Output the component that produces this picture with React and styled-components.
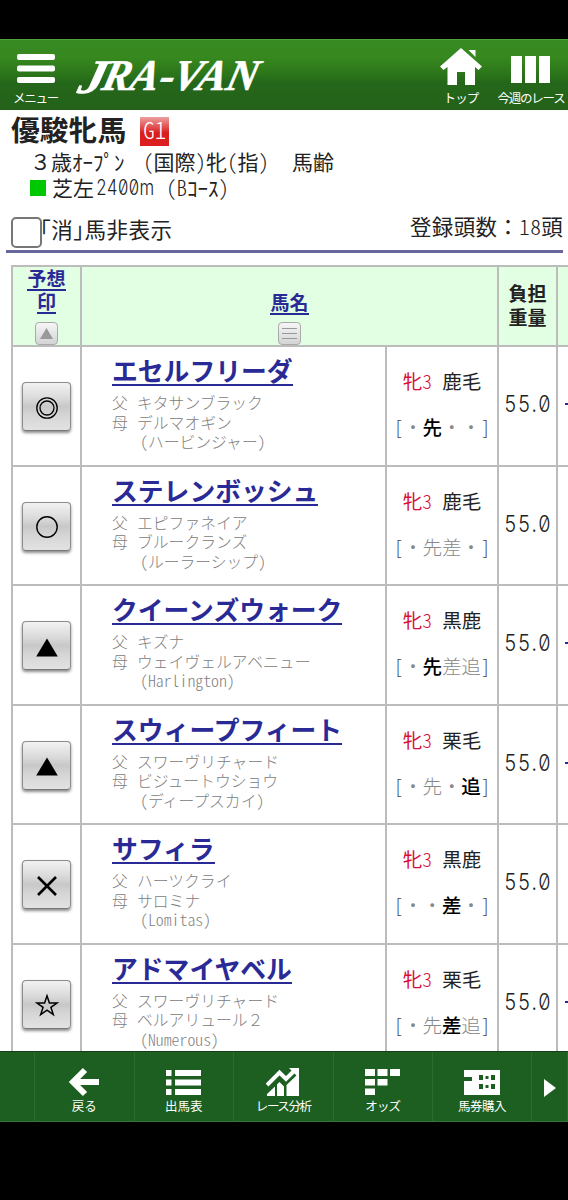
import React from 'react';
import styled, { createGlobalStyle, css } from 'styled-components';

const GlobalStyle = createGlobalStyle`
  * {
    box-sizing: border-box;
  }
  body {
    margin: 0;
    background: #000;
    font-family: 'Noto Sans CJK JP', sans-serif;
    color: #222;
  }
`;

const Screen = styled.div`
  width: 568px;
  height: 1200px;
  padding: 39px 0 78px;
  background: #000;
  display: flex;
  flex-direction: column;
  overflow: hidden;
`;

const Header = styled.header`
  height: 71px;
  flex: none;
  display: flex;
  align-items: stretch;
  border-top: 1px solid #52a03c;
  background: linear-gradient(#358a21 0%, #37881f 25%, #2a7219 52%, #24671a 60%, #24621a 100%);
  color: #fff;
`;

const HeaderButton = styled.div`
  width: ${(p) => p.$width}px;
  display: flex;
  flex-direction: column;
  align-items: center;
  justify-content: flex-end;
  padding-bottom: 5px;
  flex: none;
`;

const HeaderLabel = styled.span`
  font-size: 12.5px;
  line-height: 15px;
  letter-spacing: ${(p) => p.$spacing || 0}px;
  white-space: nowrap;
  margin-top: ${(p) => p.$gap || 3}px;
`;

const LogoArea = styled.div`
  flex: 1;
  display: flex;
  align-items: flex-start;
  padding: 14px 0 0 3px;

  svg {
    overflow: visible;
  }
`;

const Main = styled.main`
  flex: 1;
  min-height: 0;
  background: #fff;
  overflow: hidden;
`;

const RaceInfo = styled.section`
  margin: 0 5px 0 6px;
  height: 143px;
  border-bottom: 3px solid #67679b;
  padding-left: 5px;
`;

const TitleRow = styled.div`
  display: flex;
  align-items: center;
  gap: 14px;
  height: 38px;
`;

const RaceTitle = styled.h1`
  margin: 0;
  font-size: 28.8px;
  line-height: 38px;
  font-weight: 700;
`;

const GradeBadge = styled.span`
  width: 29px;
  height: 29px;
  margin-top: 5px;
  display: flex;
  align-items: center;
  justify-content: center;
  padding-bottom: 5px;
  background: linear-gradient(#eaa0a0 0%, #e04444 40%, #d91c1c 55%, #dc2020 100%);
  color: #fff;
  font-size: 23px;
  line-height: 24px;
  font-weight: 300;
  font-feature-settings: 'hwid';
`;

const InfoLine = styled.div`
  height: 26px;
  line-height: 24px;
  font-size: 21px;
  padding-left: 19px;
  display: flex;
  align-items: center;
  white-space: pre;
`;

const Turf = styled.i`
  width: 16px;
  height: 16px;
  margin: 1px 6px 0 0;
  background: #00c800;
`;

const Piece = styled.span`
  display: inline-block;
  width: ${(p) => p.$width}px;
  white-space: pre;
`;

// half-width latin letters, digits and brackets
const Half = styled.span`
  font-feature-settings: 'hwid';
  font-weight: 300;
`;

const Squeeze = styled.span`
  display: inline-block;
  font-family: Inter, 'Noto Sans CJK JP', sans-serif;
  font-feature-settings: 'zero', 'tnum';
  font-weight: 300;
  letter-spacing: ${(p) => p.$spacing || 0}px;
  transform: scaleX(${(p) => p.$ratio});
  transform-origin: ${(p) => p.$origin || 'left'} center;
`;

const FilterRow = styled.div`
  display: flex;
  align-items: center;
  height: 34px;
  margin-top: 13px;
  font-size: 21.5px;
  line-height: 26px;
`;

const Checkbox = styled.span`
  width: 31px;
  height: 31px;
  margin-top: 4px;
  border: 2px solid #777;
  border-radius: 5px;
  background: #fff;
  flex: none;
`;

const FilterLabel = styled.span`
  margin: 0 0 3px -2px;
  flex: 1;
  letter-spacing: 0.5px;
  font-feature-settings: 'halt';
`;

const Entries = styled.span`
  margin-bottom: 8px;
  letter-spacing: 0.3px;
`;

const columns = '69px 305px 112px 59px 60px';

const Table = styled.div`
  margin: 12px 0 0 11px;
  width: 607px;
  border-left: 2px solid #bcbcbc;
  border-top: 2px solid #bcbcbc;
`;

const cell = css`
  border-right: 2px solid #bcbcbc;
  border-bottom: 2px solid #bcbcbc;
`;

const HeadRow = styled.div`
  display: grid;
  grid-template-columns: 69px 417px 59px 60px;
  height: 80px;
  background: #e3ffe3;
`;

const HeadCell = styled.div`
  ${cell}
  display: flex;
  flex-direction: column;
  align-items: center;
  justify-content: ${(p) => (p.$middle ? 'center' : 'flex-end')};
  font-size: 19px;
  line-height: 23.5px;
  font-weight: 700;
  padding-bottom: ${(p) => (p.$middle ? 3 : 0)}px;
`;

const HeadLink = styled.a`
  color: #2a2a96;
  height: 23px;
  line-height: 20px;
  border-bottom: 2px solid #2a2a96;
  margin-bottom: ${(p) => p.$gap || 0}px;
`;

const SortButton = styled.span`
  width: 23px;
  height: 23px;
  border: 1px solid #aaa;
  border-radius: 4px;
  background: linear-gradient(#f6f6f6, #d4d4d4);
  display: flex;
  align-items: center;
  justify-content: center;
`;

const Row = styled.div`
  display: grid;
  grid-template-columns: ${columns};
  height: 119.5px;
`;

const Cell = styled.div`
  ${cell}
`;

const MarkCell = styled(Cell)`
  display: flex;
  align-items: center;
  justify-content: center;
  padding-top: 2px;
`;

const MarkButton = styled.span`
  width: 49px;
  height: 49px;
  padding-top: 2px;
  border: 1px solid #8c8c8c;
  border-bottom-color: #777;
  border-radius: 4px;
  background: linear-gradient(#f2f2f2 0%, #dcdcdc 30%, #c8c8c8 50%, #d6d6d6 70%, #e2e2e2 100%);
  box-shadow: 0 2px 3px rgba(0, 0, 0, 0.45);
  display: flex;
  align-items: center;
  justify-content: center;
`;

const HorseCell = styled(Cell)`
  padding: 8px 0 0 30px;
`;

const HorseName = styled.a`
  display: block;
  width: fit-content;
  height: 31px;
  font-size: 25.8px;
  line-height: 29px;
  font-weight: 700;
  color: #2a2a96;
  border-bottom: 2px solid #2a2a96;
  white-space: nowrap;
`;

const Pedigree = styled.div`
  margin-top: 7px;
  font-size: 15.8px;
  line-height: 19.5px;
  font-weight: 300;
  color: #808080;
`;

const Parent = styled.div`
  display: grid;
  grid-template-columns: 25px 1fr;
  height: 19.5px;
  white-space: nowrap;
`;

const Sire = styled.span`
  grid-column: 2;
  padding-left: ${(p) => (p.$grand ? 3 : 0)}px;
`;

const TypeCell = styled(Cell)`
  display: flex;
  flex-direction: column;
  align-items: center;
  padding-top: 19px;
  font-size: 19.5px;
  line-height: 29px;
`;

const Coat = styled.div`
  display: flex;
  gap: 10px;
`;

const Sex = styled.span`
  color: #d7103a;
`;

const Style = styled.div`
  margin-top: 17px;
  display: grid;
  grid-template-columns: 9.5px repeat(4, 19.4px) 9.5px;
  justify-items: center;
  color: #888;
`;

const Leg = styled.span`
  color: ${(p) => (p.$strong ? '#000' : '#888')};
  font-weight: ${(p) => (p.$strong ? 500 : 300)};
`;

const Bracket = styled.span`
  color: #444;
  font-weight: 300;
`;

const WeightCell = styled(Cell)`
  display: flex;
  align-items: center;
  justify-content: center;
  font-size: 23px;
  padding: 0 0 3px 1px;
`;

const JockeyCell = styled(Cell)`
  padding: 56px 0 0 7px;
`;

const JockeyLink = styled.a`
  display: block;
  height: 2px;
  background: #2a2a96;
`;

const Footer = styled.nav`
  height: 71px;
  flex: none;
  display: grid;
  grid-template-columns: 35px repeat(4, 99.5px) 99px 36px;
  background: #1d5f20;
  border-top: 1px solid #17401a;
  border-bottom: 1px solid #34733a;
  color: #fff;
`;

const Tab = styled.div`
  border-right: 1px solid #2a6d2d;
  display: flex;
  flex-direction: column;
  align-items: center;
  padding-top: 15px;
  font-size: 12.5px;
  line-height: 18px;
  white-space: nowrap;
`;

const TabLabel = styled.span`
  letter-spacing: ${(p) => p.$spacing || 0}px;
`;

const marks = {
  double: (
    <g fill="none" stroke="#000" strokeWidth="1.3">
      <circle cx="12" cy="12" r="10.2" />
      <circle cx="12" cy="12" r="7" />
    </g>
  ),
  circle: <circle cx="12" cy="12" r="10.2" fill="none" stroke="#000" strokeWidth="1.4" />,
  triangle: <path d="M12 3.5L22.8 21.5H1.2Z" />,
  cross: <path d="M3 3L21 21M21 3L3 21" stroke="#000" strokeWidth="2.6" />,
  star: (
    <path
      d="M12 2.8L14.4 10H22L15.9 14.3L18.3 21.6L12 17.1L5.7 21.6L8.1 14.3L2 10H9.6Z"
      fill="none"
      stroke="#000"
      strokeWidth="1.5"
    />
  ),
};

const horses = [
  { mark: 'double', name: 'エセルフリーダ', sire: 'キタサンブラック', dam: 'デルマオギン', grand: 'ハービンジャー', coat: '鹿毛', style: '・先・・', strong: '先', jockey: true },
  { mark: 'circle', name: 'ステレンボッシュ', sire: 'エピファネイア', dam: 'ブルークランズ', grand: 'ルーラーシップ', coat: '鹿毛', style: '・先差・', strong: '' },
  { mark: 'triangle', name: 'クイーンズウォーク', sire: 'キズナ', dam: 'ウェイヴェルアベニュー', grand: 'Harlington', latin: true, coat: '黒鹿', style: '・先差追', strong: '先', jockey: true },
  { mark: 'triangle', name: 'スウィープフィート', sire: 'スワーヴリチャード', dam: 'ビジュートウショウ', grand: 'ディープスカイ', coat: '栗毛', style: '・先・追', strong: '追', jockey: true },
  { mark: 'cross', name: 'サフィラ', sire: 'ハーツクライ', dam: 'サロミナ', grand: 'Lomitas', latin: true, coat: '黒鹿', style: '・・差・', strong: '差' },
  { mark: 'star', name: 'アドマイヤベル', sire: 'スワーヴリチャード', dam: 'ベルアリュール２', grand: 'Numerous', latin: true, coat: '栗毛', style: '・先差追', strong: '差', jockey: true },
];

const HorseRow = ({ horse }) => (
  <Row>
    <MarkCell>
      <MarkButton>
        <svg width="24" height="24" viewBox="0 0 24 24">{marks[horse.mark]}</svg>
      </MarkButton>
    </MarkCell>
    <HorseCell>
      <HorseName>{horse.name}</HorseName>
      <Pedigree>
        <Parent><span>父</span><Sire>{horse.sire}</Sire></Parent>
        <Parent><span>母</span><Sire>{horse.dam}</Sire></Parent>
        <Parent>
          <Sire $grand>
            {horse.latin
              ? <Half>({horse.grand})</Half>
              : <><Half>(</Half>{horse.grand}<Half>)</Half></>}
          </Sire>
        </Parent>
      </Pedigree>
    </HorseCell>
    <TypeCell>
      <Coat><Sex>牝<Half>3</Half></Sex><span>{horse.coat}</span></Coat>
      <Style>
        <Bracket>[</Bracket>
        {[...horse.style].map((c, i) => (
          <Leg key={i} $strong={c === horse.strong}>{c}</Leg>
        ))}
        <Bracket>]</Bracket>
      </Style>
    </TypeCell>
    <WeightCell><Squeeze $ratio={0.86} $spacing={1.2} $origin="center">55.0</Squeeze></WeightCell>
    <JockeyCell>{horse.jockey && <JockeyLink />}</JockeyCell>
  </Row>
);

const App = () => (
  <Screen>
    <GlobalStyle />
    <Header>
      <HeaderButton $width={71}>
        <svg width="38" height="29" viewBox="0 0 38 29" fill="#fff">
          <rect width="38" height="6" rx="2" />
          <rect y="11.5" width="38" height="6" rx="2" />
          <rect y="23" width="38" height="6" rx="2" />
        </svg>
        <HeaderLabel $spacing={-1.3} $gap={7}>メニュー</HeaderLabel>
      </HeaderButton>
      <LogoArea>
        <svg width="195" height="50" viewBox="0 0 195 50">
          <g
            transform="skewX(-14)"
            fill="#fff"
            stroke="#fff"
            strokeWidth="0.5"
            fontFamily="Liberation Serif, serif"
            fontWeight="700"
            fontStyle="italic"
          >
            <text x="12" y="39" fontSize="48" textLength="27" lengthAdjust="spacingAndGlyphs">J</text>
            <text x="35" y="35.500" fontSize="44" textLength="56" lengthAdjust="spacingAndGlyphs">RA</text>
            <text x="92" y="35.500" fontSize="43" textLength="15" lengthAdjust="spacingAndGlyphs">-</text>
            <text x="105" y="35.500" fontSize="44" textLength="85" lengthAdjust="spacingAndGlyphs">VAN</text>
          </g>
        </svg>
      </LogoArea>
      <HeaderButton $width={66}>
        <svg width="42" height="38" viewBox="0 0 42 38" fill="#fff">
          <path d="M21 0L42 18.5L38.5 22L35 19V37H25V24H17V37H7.500V19L3.500 22L0 18.500ZM28.500 2H35.500V9Z" />
        </svg>
        <HeaderLabel $spacing={-0.8} $gap={4}>トップ</HeaderLabel>
      </HeaderButton>
      <HeaderButton $width={74}>
        <svg width="40" height="34" viewBox="0 0 40 34" fill="#fff">
          <path d="M0 3H11V30H0ZM14 3H25V30H14ZM28 3H39V30H28Z" />
        </svg>
        <HeaderLabel $spacing={-1.2}>今週のレース</HeaderLabel>
      </HeaderButton>
    </Header>
    <Main>
      <RaceInfo>
        <TitleRow>
          <RaceTitle>優駿牝馬</RaceTitle>
          <GradeBadge>G1</GradeBadge>
        </TitleRow>
        <InfoLine>
          <Piece $width={113}>３歳ｵｰﾌﾟﾝ</Piece>
          <Piece $width={149}><Half>(</Half>国際<Half>)</Half>牝<Half>(</Half>指<Half>)</Half></Piece>
          <span>馬齢</span>
        </InfoLine>
        <InfoLine>
          <Turf />
          <Piece $width={44}>芝左</Piece>
          <Piece $width={70}><Squeeze $ratio={0.8}>2400m</Squeeze></Piece>
          <span><Half>(B</Half>ｺｰｽ<Half>)</Half></span>
        </InfoLine>
        <FilterRow>
          <Checkbox />
          <FilterLabel>「消」馬非表示</FilterLabel>
          <Entries>登録頭数：<Half>18</Half>頭</Entries>
        </FilterRow>
      </RaceInfo>
      <Table>
        <HeadRow>
          <HeadCell>
            <HeadLink>予想</HeadLink>
            <HeadLink $gap={8}>印</HeadLink>
            <SortButton>
              <svg width="13" height="11" viewBox="0 0 13 11"><path d="M6.500 0L13 11H0Z" fill="#999" /></svg>
            </SortButton>
          </HeadCell>
          <HeadCell>
            <HeadLink $gap={7}>馬名</HeadLink>
            <SortButton>
              <svg width="15" height="13" viewBox="0 0 15 13"><path d="M0 1.500H15M0 6.500H15M0 11.500H15" stroke="#999" /></svg>
            </SortButton>
          </HeadCell>
          <HeadCell $middle><span>負担</span><span>重量</span></HeadCell>
          <HeadCell />
        </HeadRow>
        {horses.map((horse) => <HorseRow key={horse.name} horse={horse} />)}
      </Table>
    </Main>
    <Footer>
      <Tab />
      <Tab>
        <svg width="30" height="30" viewBox="0 0 30 30" fill="none" stroke="#fff" strokeWidth="6">
          <path d="M16 3L4 15L16 27M5 15H30" />
        </svg>
        <TabLabel>戻る</TabLabel>
      </Tab>
      <Tab>
        <svg width="35" height="30" viewBox="0 0 35 30" fill="#fff">
          <path d="M0 3H5.500V9H0ZM9 3H35V9H9ZM0 12.500H5.500V18.500H0ZM9 12.500H35V18.500H9ZM0 22H5.500V28H0ZM9 22H35V28H9Z" />
        </svg>
        <TabLabel>出馬表</TabLabel>
      </Tab>
      <Tab>
        <svg width="34" height="30" viewBox="0 0 34 30" fill="#fff">
          <path d="M1 18L13.500 5.500L20 12L28 4" fill="none" stroke="#fff" strokeWidth="4" />
          <path d="M23 1H33V11ZM1 29V27L9 19.500V29ZM11 29V17.500L13.500 15L18 19.500V29ZM20.500 29V18L33 6V29Z" />
        </svg>
        <TabLabel $spacing={-1.4}>レース分析</TabLabel>
      </Tab>
      <Tab>
        <svg width="35" height="30" viewBox="0 0 35 30" fill="#fff">
          <path d="M0 2H10V9H0ZM12.500 2H22.500V9H12.500ZM25 2H35V9H25ZM0 12H10V18.500H0ZM12.500 12H22.500V18.500H12.500ZM0 21.500H10V28H0Z" />
        </svg>
        <TabLabel $spacing={-0.8}>オッズ</TabLabel>
      </Tab>
      <Tab>
        <svg width="36" height="30" viewBox="0 0 36 30" fill="#fff" fillRule="evenodd">
          <path d="M0 3H36V28H0V14H8V10H0ZM15 8H19V13H15ZM27 8H31V13H27ZM15 17H19V22H15ZM27 17H31V22H27ZM21.500 9H24.500V12H21.500ZM21.500 18H24.500V21H21.500Z" />
        </svg>
        <TabLabel $spacing={-0.5}>馬券購入</TabLabel>
      </Tab>
      <Tab>
        <svg width="12" height="42" viewBox="0 0 12 42" fill="#fff"><path d="M0 12L12 21L0 30Z" /></svg>
      </Tab>
    </Footer>
  </Screen>
);

export default App;
